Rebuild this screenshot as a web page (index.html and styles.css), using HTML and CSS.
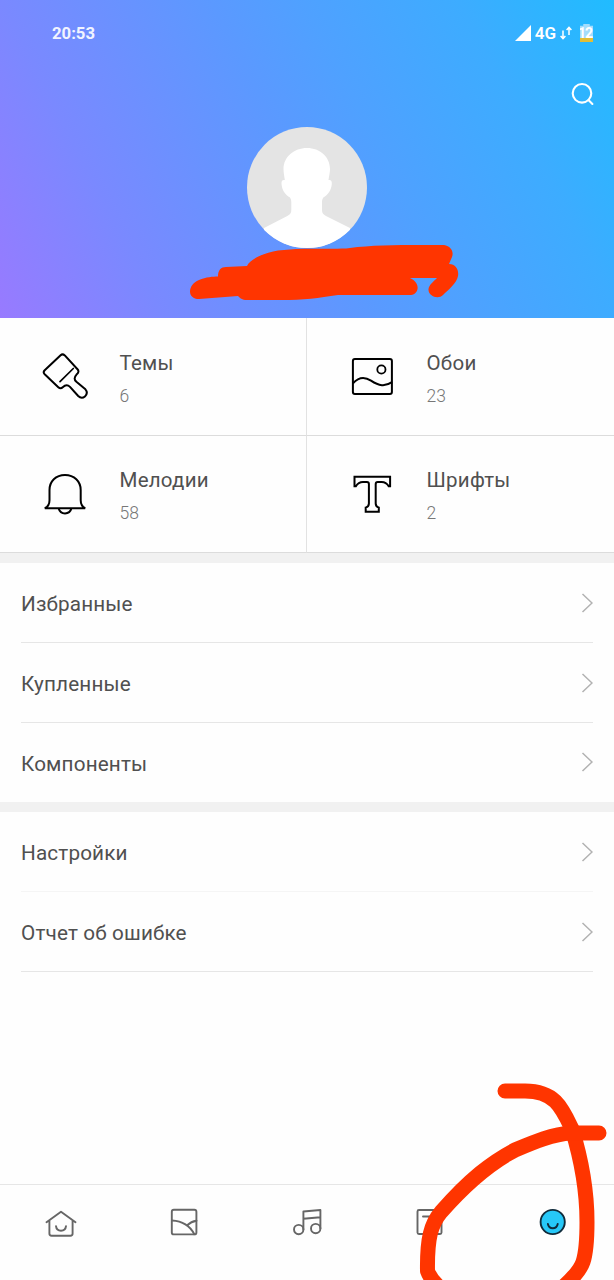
FILE: index.html
```html
<!DOCTYPE html>
<html lang="ru">
<head>
    <meta charset="UTF-8">
    <meta name="viewport" content="width=device-width, initial-scale=1.0">
    <title>Темы</title>
    <link rel="stylesheet" href="styles.css">
</head>
<body>
    <div class="screen">
        <header class="header">
            <div class="status-bar">
                <span class="time">20:53</span>
                <div class="status-icons">
                    <svg class="signal" width="16" height="16" viewBox="0 0 16 16"><path d="M16 0v16H0z" fill="#fff"/></svg>
                    <span class="network">4G</span>
                    <svg class="arrows" width="12" height="14" viewBox="0 0 12 14" fill="none" stroke="#fff" stroke-width="1.5"><path d="M3 4.500v8M.6 10L3 12.600 5.400 10M9 9V1.400M6.600 4L9 1.400 11.400 4"/></svg>
                    <div class="battery"><span class="battery-level">12</span></div>
                </div>
            </div>
            <div class="toolbar">
                <svg width="24" height="24" viewBox="0 0 24 24" fill="none" stroke="#fff" stroke-width="2.1" stroke-linecap="round"><circle cx="11" cy="11.300" r="9.300"/><path d="M17.400 18l4 4"/></svg>
            </div>
            <svg class="avatar" width="120" height="121" viewBox="0 0 120 121">
                <clipPath id="round"><ellipse cx="60" cy="60.5" rx="60" ry="60.5"/></clipPath>
                <g clip-path="url(#round)">
                    <path d="M0 0h120v121H0z" fill="#e4e4e4"/>
                    <path d="M60 21c-13 0-23.500 9-23.500 21 0 4 .8 7 1.300 11-2.500-.5-3.500 1-3.300 4 .5 6.500 4 11 8.500 13.500 1 1.500 1.300 3 1.300 5V83c0 3-1 4.500-4 6L17 101v20h86v-20L79 89c-3-1.500-4-3-4-6v-7.500c0-2 .3-3.500 1.300-5 4.500-2.500 8-7 8.500-13.500.2-3-.8-4.500-3.300-4 .5-4 1.500-7 1.500-11 0-12-10-21-23-21z" fill="#fff"/>
                </g>
            </svg>
        </header>

        <div class="categories">
            <div class="category">
                <svg class="category-icon" width="48" height="48" viewBox="0 0 48 48" fill="none" stroke="#000" stroke-width="2" stroke-linejoin="round" stroke-linecap="round">
                    <path d="M19.600 2.200L3.700 17.300q-2 2 0 4L17.300 34.200q2.300 2.200 4.400 0 3.900-3.600 7.300-.3l8.200 9.100q3.300 3.300 6.700.5 3.600-3.500.5-7.200l-9-7.500q-3.600-3.200.1-7.200 3.300-2.800 1-5.300L23.800 2.400q-2.200-2-4.200-.2z"/>
                    <path d="M19 28.700L32.300 15.500" stroke-width="1.700"/>
                </svg>
                <div class="category-text">
                    <div class="category-name">Темы</div>
                    <div class="category-count">6</div>
                </div>
            </div>
            <div class="category">
                <svg class="category-icon" width="48" height="48" viewBox="0 0 48 48" fill="none" stroke="#000" stroke-width="2">
                    <rect x="4.900" y="6" width="39" height="35" rx="2"/>
                    <circle cx="33.400" cy="16.500" r="4.100" stroke-width="1.800"/>
                    <path d="M5 30.200c6-6.500 12-6.500 18-2.500 8 5.300 14 6.200 21 1.500"/>
                </svg>
                <div class="category-text">
                    <div class="category-name">Обои</div>
                    <div class="category-count">23</div>
                </div>
            </div>
            <div class="category">
                <svg class="category-icon" width="48" height="48" viewBox="0 0 48 48" fill="none" stroke="#000" stroke-width="2">
                    <path d="M3.800 37.200h40.400c-3-1.500-4.500-4.500-4.500-8V19c0-8.500-6.500-15-15.700-15S8.500 10.500 8.500 19v10.200c0 3.500-1.500 6.500-4.700 8z"/>
                    <path d="M17.700 37.500c.8 3 3.200 4.900 6.300 4.900s5.600-1.900 6.300-4.900"/>
                </svg>
                <div class="category-text">
                    <div class="category-name">Мелодии</div>
                    <div class="category-count">58</div>
                </div>
            </div>
            <div class="category">
                <svg class="category-icon" width="48" height="48" viewBox="0 0 48 48" fill="none" stroke="#000" stroke-width="2">
                    <path d="M6.500 5.800h35.600v9.400h-1.400c-1.800-3-3.900-4.200-7-4.200h-4q-2 0-2 2v19.500c0 2 .8 3.400 3.100 4.100v4.200H17.700v-4.200c2.300-.7 3.200-2.100 3.200-4.100V13q0-2-2-2h-4c-3.100 0-5.200 1.200-7 4.200H6.500z"/>
                </svg>
                <div class="category-text">
                    <div class="category-name">Шрифты</div>
                    <div class="category-count">2</div>
                </div>
            </div>
        </div>

        <div class="menu">
            <div class="menu-item"><span>Избранные</span><svg class="chevron" viewBox="0 0 12 20"><path d="M1.500 1l9.500 9-9.500 9"/></svg></div>
            <div class="menu-item"><span>Купленные</span><svg class="chevron" viewBox="0 0 12 20"><path d="M1.500 1l9.500 9-9.500 9"/></svg></div>
            <div class="menu-item last"><span>Компоненты</span><svg class="chevron" viewBox="0 0 12 20"><path d="M1.500 1l9.500 9-9.500 9"/></svg></div>
        </div>
        <div class="menu">
            <div class="menu-item faint"><span>Настройки</span><svg class="chevron" viewBox="0 0 12 20"><path d="M1.500 1l9.500 9-9.500 9"/></svg></div>
            <div class="menu-item"><span>Отчет об ошибке</span><svg class="chevron" viewBox="0 0 12 20"><path d="M1.500 1l9.500 9-9.500 9"/></svg></div>
        </div>

        <nav class="tabs">
            <div class="tab">
                <svg class="tab-icon" viewBox="0 0 32 32">
                    <path d="M1.500 15.300L16 4.700l14.500 10.600M4.400 13.700V26.500q0 2.200 2.200 2.200h18.800q2.200 0 2.200-2.200V13.700M11 19.200c.3 3 2 4.500 5 4.500s4.700-1.500 5-4.500"/>
                </svg>
            </div>
            <div class="tab">
                <svg class="tab-icon" viewBox="0 0 32 32">
                    <rect x="3.800" y="2.800" width="24.600" height="24.600" rx="2"/>
                    <path d="M4 13.500c10 .5 17.500 4.500 22.300 13.700M19.500 18c2.300-2.300 5-3.700 9-4.300"/>
                </svg>
            </div>
            <div class="tab">
                <svg class="tab-icon" viewBox="0 0 32 32">
                    <circle cx="7.700" cy="22.600" r="4.700"/>
                    <circle cx="24.700" cy="21.600" r="4.700"/>
                    <path d="M12.400 22.600V4.500l17-1.500v18.600M12.400 11.700l17-1.500"/>
                </svg>
            </div>
            <div class="tab">
                <svg class="tab-icon" viewBox="0 0 32 32">
                    <rect x="3.500" y="3" width="24" height="24" rx="1.500"/>
                    <path d="M9 9.500h13M15.500 9.500v12"/>
                </svg>
            </div>
            <div class="tab">
                <svg class="tab-icon active" viewBox="0 0 32 32">
                    <circle cx="15.700" cy="15" r="12.100"/>
                    <path d="M10.900 17c.5 2.700 2.200 4.200 4.900 4.200s4.400-1.500 4.900-4.200"/>
                </svg>
            </div>
        </nav>

        <!-- hand-drawn marker strokes -->
        <svg class="marker" width="614" height="1280" viewBox="0 0 614 1280">
            <path class="marker-fill" d="M199 280C206 277 213 276.500 218 276.500C218 270 221 267 226 267L247 266C250 259 264 253 278 250.500C305 247 335 250 350 248C375 244.500 410 245 444 245C451 246 454 252 452 257L449 264C456 264 459 270 458 276C457 283 448 290 443 295C438 300 428 296 428.500 289C429 285 433 282 437 278L410 278C421 283 419 294 411 295L338 295C318 298 305 300 280 300L247 300C242 300 240 298 238 296L199 299C187 299 187 285 199 280Z"/>
            <path class="marker-line" d="M505 1091H525C555 1091 562 1108 572 1129C580 1155 587 1188 587 1222C587 1240 586 1253 583 1262C580 1271 572 1279 562 1288"/>
            <path class="marker-line" d="M599 1133H571C553 1134 534 1142 515 1150C492 1162 470 1179 441 1212C431 1224 427 1238 427.500 1271C430 1278 436 1285 445 1292"/>
        </svg>
    </div>
</body>
</html>
```
FILE: styles.css
```css
* {
    box-sizing: border-box;
}
body {
    margin: 0;
    font-family: Roboto, "Liberation Sans", sans-serif;
    background-color: #fefefe;
    color: #505050;
}
.screen {
    position: relative;
    display: flex;
    flex-direction: column;
    width: 614px;
    height: 1280px;
    overflow: hidden;
}
.header {
    display: flex;
    flex-direction: column;
    height: 318px;
    background: linear-gradient(63deg, #987aff 0%, #7a89ff 21%, #5b99ff 48%, #4fa1ff 60%, #3dacff 80%, #20bcff 100%);
}
.status-bar {
    display: flex;
    justify-content: space-between;
    align-items: center;
    height: 66px;
    padding: 0 21px 0 52px;
    color: #fff;
    font-weight: 700;
    font-size: 16.7px;
}
.time {
    color: #f1f4ff;
}
.status-icons {
    display: flex;
    align-items: center;
}
.network {
    margin: 0 4px 0 4px;
    font-size: 17px;
    font-weight: 600;
}
.battery {
    width: 13px;
    height: 18px;
    margin-left: 8px;
    background: linear-gradient(#a3dcfc 0 80%, #e2bd36 80%);
    clip-path: polygon(25% 0, 75% 0, 75% 10%, 100% 10%, 100% 100%, 0 100%, 0 10%, 25% 10%);
}
.battery-level {
    display: block;
    font-size: 14px;
    line-height: 19px;
    margin-left: -2px;
    letter-spacing: -1px;
}
.toolbar {
    display: flex;
    justify-content: flex-end;
    height: 61px;
    padding: 16px 19px 0 0;
}
.avatar {
    align-self: center;
}
.categories {
    display: grid;
    grid-template-columns: 307px 307px;
    grid-template-rows: 118px 117px;
}
.category {
    display: flex;
    padding-left: 41px;
    border-bottom: 1px solid #dcdcdc;
}
.category:nth-child(odd) {
    border-right: 1px solid #e2e2e2;
}
.category-icon {
    margin-top: 35px;
}
.category:nth-child(n+3) .category-icon {
    margin-top: 34.5px;
}
.category-text {
    padding: 32px 0 0 30.5px;
}
.category:nth-child(n+3) .category-text {
    padding-top: 31px;
}
.category-name {
    font-size: 20.5px;
    line-height: 26px;
    letter-spacing: 0.25px;
}
.category-count {
    margin-top: 9px;
    font-size: 17.5px;
    line-height: 22px;
    font-weight: 300;
    color: #777;
}
.menu {
    padding: 0 21px;
    border-top: 10px solid #f1f1f1;
}
.menu-item {
    display: flex;
    justify-content: space-between;
    align-items: center;
    height: 80px;
    border-bottom: 1px solid #e6e6e6;
    font-size: 20.7px;
    letter-spacing: 0.15px;
}
.menu-item span {
    padding-top: 3px;
}
.menu-item.last {
    height: 79px;
    border-bottom-color: transparent;
}
.menu-item.faint {
    border-bottom-color: #f5f5f5;
}
.chevron {
    width: 12px;
    height: 20px;
    fill: none;
    stroke: #b2b2b2;
    stroke-width: 1.5;
}
.tabs {
    display: flex;
    height: 96px;
    margin-top: auto;
    border-top: 1px solid #e6e6e6;
}
.tab {
    flex: 1;
    display: flex;
    justify-content: center;
    padding-top: 22px;
}
.tab-icon {
    width: 32px;
    height: 32px;
    fill: none;
    stroke: #666;
    stroke-width: 1.9;
    stroke-linecap: round;
    stroke-linejoin: round;
}
.active {
    stroke: #102b3b;
}
.active circle {
    fill: #26c8f8;
}
.marker {
    position: absolute;
    top: 0;
    left: 0;
    pointer-events: none;
}
.marker-fill {
    fill: #ff3500;
}
.marker-line {
    fill: none;
    stroke: #ff3500;
    stroke-width: 15;
    stroke-linecap: round;
    stroke-linejoin: round;
}
```
